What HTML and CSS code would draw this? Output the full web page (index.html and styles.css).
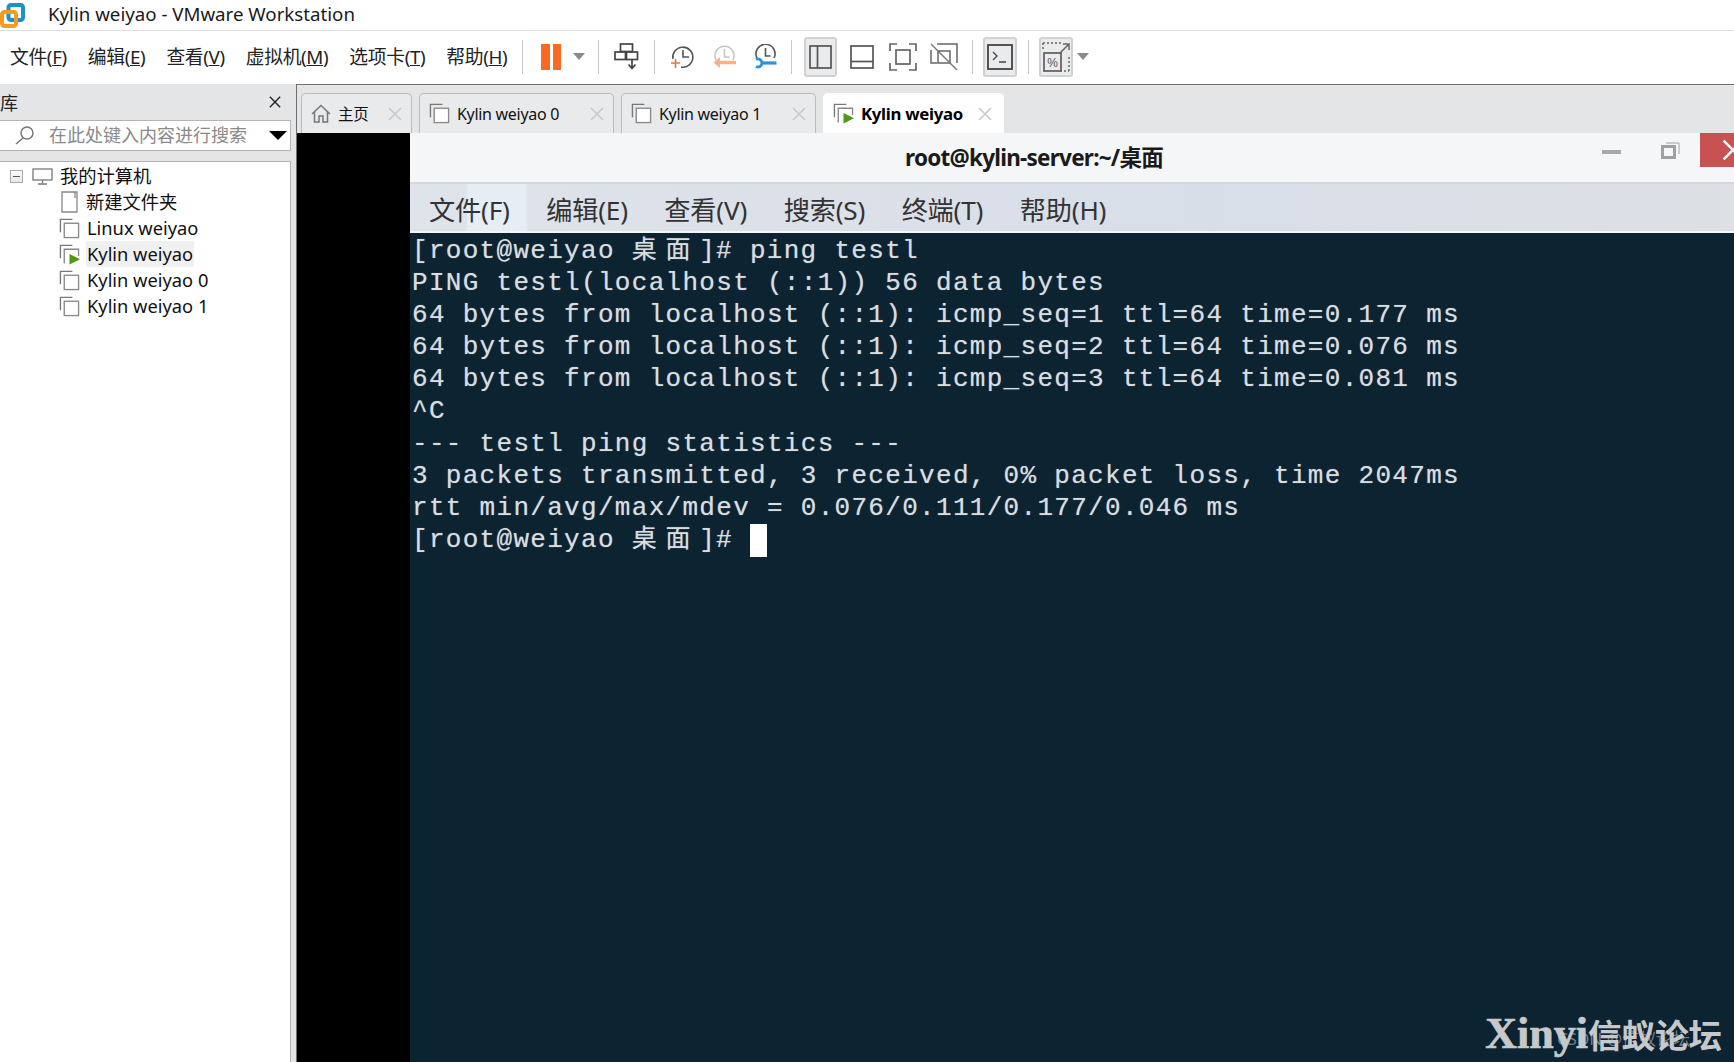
FILE: index.html
```html
<!DOCTYPE html>
<html lang="zh">
<head>
<meta charset="utf-8">
<title>Kylin weiyao - VMware Workstation</title>
<link rel="stylesheet" href="styles.css">
</head>
<body>
<svg class="defs" width="0" height="0" aria-hidden="true">
  <symbol id="vm" viewBox="0 0 22 22">
    <path d="M1.5 15V1.5H14" fill="none" stroke="#777" stroke-width="1.4"/>
    <rect x="5.5" y="5.5" width="15" height="15" fill="#fff" stroke="#888" stroke-width="1.4"/>
  </symbol>
  <symbol id="vmrun" viewBox="0 0 22 22">
    <path d="M1.5 15V1.5H14" fill="none" stroke="#777" stroke-width="1.4"/>
    <path d="M5.5 20.5V5.5h15v7" fill="none" stroke="#888" stroke-width="1.4"/>
    <path d="M11 10.5 22 16 11 21.5z" fill="#4d9a12"/>
  </symbol>
  <symbol id="x" viewBox="0 0 14 14">
    <path d="M1 1 13 13M13 1 1 13" fill="none" stroke="currentColor" stroke-width="1.6"/>
  </symbol>
</svg>
<div class="app">
  <header class="titlebar">
    <svg class="logo" width="25" height="26" viewBox="0 0 25 26">
      <rect x="8.5" y="3" width="14.5" height="15" rx="2.5" fill="#fff" stroke="#1f8fc9" stroke-width="4"/>
      <rect x="2" y="10" width="14" height="14" rx="2.5" fill="none" stroke="#f59a1c" stroke-width="4"/>
    </svg>
    <span class="title-text">Kylin weiyao - VMware Workstation</span>
  </header>

  <nav class="toolbar">
    <div class="menu">
      <span class="menu-item">文件(<u>F</u>)</span>
      <span class="menu-item">编辑(<u>E</u>)</span>
      <span class="menu-item">查看(<u>V</u>)</span>
      <span class="menu-item">虚拟机(<u>M</u>)</span>
      <span class="menu-item">选项卡(<u>T</u>)</span>
      <span class="menu-item">帮助(<u>H</u>)</span>
    </div>
    <i class="sep sep-a"></i>
    <div class="pause"><b></b><b></b></div>
    <i class="caret caret-a"></i>
    <i class="sep sep-b"></i>
    <svg class="tool tool-net" width="25" height="27" viewBox="0 0 25 27" fill="none" stroke="#444" stroke-width="1.7">
      <rect x="6.5" y="1" width="12" height="7.5"/>
      <rect x="1" y="9" width="10.5" height="7.5"/>
      <rect x="12.5" y="9" width="11" height="7.5"/>
      <path d="M18 17v8M14.5 21.5 18 25.500l3.500-4"/>
    </svg>
    <i class="sep sep-c"></i>
    <svg class="tool tool-clock" width="24" height="26" viewBox="0 0 24 26" fill="none" stroke="#555" stroke-width="1.6">
      <path d="M3 15A10 10 0 1 1 11 23"/>
      <path d="M13 6v7h6"/>
      <path d="M1 19h9M5.500 15v9" stroke="#e8763a"/>
    </svg>
    <svg class="tool tool-clock" width="24" height="26" viewBox="0 0 24 26" fill="none" stroke="#c4c4c4" stroke-width="1.5">
      <path d="M4 16A9.500 9.500 0 1 1 21 16"/>
      <path d="M12.500 5v8h5"/>
      <path d="M24 18.500H6" stroke="#fbb08c" stroke-width="3.500"/>
      <path d="M8 13 1.500 18.500 8 24z" fill="#fbb08c" stroke="none"/>
    </svg>
    <svg class="tool tool-clock" width="24" height="26" viewBox="0 0 24 26" fill="none" stroke="#555" stroke-width="1.6">
      <path d="M4 14A9.500 9.500 0 1 1 21 14"/>
      <path d="M12.500 4v8h5"/>
      <path d="M23.500 19H8" stroke="#2b93dc" stroke-width="3.200"/>
      <path d="M3 15.500A4 4 0 1 1 3 22.500" stroke="#2b93dc" stroke-width="2.800"/>
    </svg>
    <i class="sep sep-d"></i>
    <div class="btn btn-on">
      <svg width="23" height="24" viewBox="0 0 23 24" fill="none" stroke="#555" stroke-width="1.700"><rect x="1" y="1" width="21" height="22"/><path d="M8.500 1v22"/></svg>
    </div>
    <div class="btn">
      <svg width="24" height="24" viewBox="0 0 24 24" fill="none" stroke="#555" stroke-width="1.700"><rect x="1" y="1" width="22" height="22"/><path d="M1 16.500h22"/></svg>
    </div>
    <div class="btn">
      <svg width="28" height="28" viewBox="0 0 28 28" fill="none" stroke="#666" stroke-width="1.700"><path d="M8 1H1v7M20 1h7v7M8 27H1v-7M20 27h7v-7"/><rect x="7" y="7" width="14" height="14"/></svg>
    </div>
    <div class="btn">
      <svg width="28" height="28" viewBox="0 0 28 28" fill="none" stroke="#666" stroke-width="1.500"><path d="M1 7v13h6M7 1H27V20"/><rect x="8" y="8" width="12" height="12"/><path d="M1 1 27 27" stroke="#777"/></svg>
    </div>
    <i class="sep sep-e"></i>
    <div class="btn btn-on btn-term">
      <svg width="26" height="26" viewBox="0 0 26 26" fill="none" stroke="#444" stroke-width="1.800"><rect x="1" y="1" width="24" height="24"/><path d="M6 8l4 4-4 4M12 18h7" stroke-width="1.300"/></svg>
    </div>
    <i class="sep sep-f"></i>
    <div class="btn btn-on btn-fit">
      <svg width="28" height="30" viewBox="0 0 28 30" fill="none" stroke="#666" stroke-width="1.500">
        <path d="M1 1h18M1 1v6M27 15v14M18 29h9" stroke-dasharray="2 2"/>
        <rect x="2" y="11" width="17" height="18" stroke-width="1.800"/>
        <path d="M18 11 27 2M21 2h6v6"/>
        <text class="fit-pct" x="10.500" y="25" text-anchor="middle">%</text>
      </svg>
    </div>
    <i class="caret caret-b"></i>
  </nav>

  <div class="workspace">
    <aside class="sidebar">
      <div class="side-head">
        <span class="side-title">库</span>
        <svg class="side-close" width="12" height="12"><use href="#x"/></svg>
      </div>
      <div class="search">
        <svg class="search-icon" width="20" height="19" viewBox="0 0 20 19" fill="none" stroke="#777" stroke-width="1.500"><circle cx="12" cy="7" r="6"/><path d="M8 12 1 18"/></svg>
        <span class="search-text">在此处键入内容进行搜索</span>
        <i class="search-arrow"></i>
      </div>
      <div class="tree">
        <div class="row root">
          <span class="toggle"></span>
          <svg class="pc" width="21" height="17" viewBox="0 0 21 17" fill="none" stroke="#777" stroke-width="1.300"><rect x="1" y="1" width="19" height="11"/><path d="M10.500 12v3M6 16h9"/></svg>
          <span class="row-text root-text">我的计算机</span>
        </div>
        <div class="row child">
          <svg class="row-icon" width="20" height="22" viewBox="0 0 20 22" fill="none" stroke="#888" stroke-width="1.300"><path d="M3 1h15v20H3zM16 1v6"/></svg>
          <span class="row-text">新建文件夹</span>
        </div>
        <div class="row child">
          <svg class="row-icon" width="21" height="21"><use href="#vm"/></svg>
          <span class="row-text">Linux weiyao</span>
        </div>
        <div class="row child">
          <svg class="row-icon" width="21" height="21"><use href="#vmrun"/></svg>
          <span class="row-text row-active">Kylin weiyao</span>
        </div>
        <div class="row child">
          <svg class="row-icon" width="21" height="21"><use href="#vm"/></svg>
          <span class="row-text">Kylin weiyao 0</span>
        </div>
        <div class="row child">
          <svg class="row-icon" width="21" height="21"><use href="#vm"/></svg>
          <span class="row-text">Kylin weiyao 1</span>
        </div>
      </div>
    </aside>

    <main class="main">
      <div class="tabs">
        <div class="tab tab-home">
          <svg class="tab-icon" width="20" height="19" viewBox="0 0 20 19" fill="none" stroke="#777" stroke-width="1.500"><path d="M1 10 10 1.500 19 10M3.500 8v10h4.500v-6h4v6h4.500V8"/></svg>
          <span class="tab-label">主页</span>
          <svg class="tab-close" width="14" height="14"><use href="#x"/></svg>
        </div>
        <div class="tab tab-vm">
          <svg class="tab-icon" width="21" height="21"><use href="#vm"/></svg>
          <span class="tab-label">Kylin weiyao 0</span>
          <svg class="tab-close" width="14" height="14"><use href="#x"/></svg>
        </div>
        <div class="tab tab-vm">
          <svg class="tab-icon" width="21" height="21"><use href="#vm"/></svg>
          <span class="tab-label">Kylin weiyao 1</span>
          <svg class="tab-close" width="14" height="14"><use href="#x"/></svg>
        </div>
        <div class="tab tab-active">
          <svg class="tab-icon" width="21" height="21"><use href="#vmrun"/></svg>
          <span class="tab-label">Kylin weiyao</span>
          <svg class="tab-close" width="14" height="14"><use href="#x"/></svg>
        </div>
      </div>
      <div class="stage">
        <div class="black"></div>
        <section class="window">
          <div class="win-title">
            <span class="win-name">root@kylin-server:~/桌面</span>
            <i class="win-min"></i>
            <svg class="win-restore" width="19" height="17" viewBox="0 0 19 17" fill="none" stroke="#a0a0a0"><rect x="1.500" y="4.500" width="12" height="11" stroke-width="3"/><path d="M5 1h13v11" stroke-width="1"/></svg>
            <div class="win-close"><svg width="22" height="22"><use href="#x"/></svg></div>
          </div>
          <div class="win-menu">
            <span>文件(F)</span>
            <span>编辑(E)</span>
            <span>查看(V)</span>
            <span>搜索(S)</span>
            <span>终端(T)</span>
            <span>帮助(H)</span>
          </div>
          <div class="term">
            <div class="line">[root@weiyao <span class="wide">桌</span><span class="wide">面</span>]# ping testl</div>
            <div class="line">PING testl(localhost (::1)) 56 data bytes</div>
            <div class="line">64 bytes from localhost (::1): icmp_seq=1 ttl=64 time=0.177 ms</div>
            <div class="line">64 bytes from localhost (::1): icmp_seq=2 ttl=64 time=0.076 ms</div>
            <div class="line">64 bytes from localhost (::1): icmp_seq=3 ttl=64 time=0.081 ms</div>
            <div class="line">^C</div>
            <div class="line">--- testl ping statistics ---</div>
            <div class="line">3 packets transmitted, 3 received, 0% packet loss, time 2047ms</div>
            <div class="line">rtt min/avg/max/mdev = 0.076/0.111/0.177/0.046 ms</div>
            <div class="line">[root@weiyao <span class="wide">桌</span><span class="wide">面</span>]# <i class="cursor"></i></div>
          </div>
          <div class="mark"><span class="mark-latin">Xinyi</span><span class="mark-cjk">信蚁论坛</span></div>
          <div class="mark-faint">CSDN @信蚁论坛</div>
        </section>
      </div>
    </main>
  </div>
</div>
</body>
</html>
```
FILE: styles.css
```css
* { box-sizing: border-box; }
html, body { margin: 0; padding: 0; }
body {
  background: #fff;
  font-family: "Noto Sans", "Noto Sans CJK SC", sans-serif;
  color: #111;
  overflow: hidden;
}
.defs { position: absolute; }
.app { width: 1734px; height: 1062px; display: flex; flex-direction: column; overflow: hidden; }

.titlebar {
  height: 31px; flex: none; display: flex; align-items: center;
  border-bottom: 1px solid #dedede; background: #fff;
}
.logo { margin-right: 23px; flex: none; }
.title-text { font-size: 18.700px; line-height: 26px; color: #1a1a1a; position: relative; top: -1px; }

.toolbar { height: 53px; flex: none; display: flex; align-items: center; background: #fff; padding-bottom: 2px; }
.menu { display: flex; padding-left: 10px; width: 522px; flex: none; gap: 21px; }
.menu-item { font-size: 18.800px; letter-spacing: -.35px; white-space: nowrap; color: #222; position: relative; top: -1px; }
.sep { display: block; width: 1px; height: 34px; background: #c8c8c8; flex: none; }
.pause { display: flex; gap: 3px; margin-left: 18px; }
.pause b { display: block; width: 8.500px; height: 26px; background: #fb6a21; }
.caret {
  display: block; width: 0; height: 0; flex: none;
  border-left: 6px solid transparent; border-right: 6px solid transparent;
  border-top: 7px solid #8a8a8a;
}
.caret-a { margin: 0 13px 0 12px; }
.tool { display: block; flex: none; }
.tool-net { margin: 0 15px; }
.sep-c { margin-right: 15px; }
.tool-clock { margin-right: 18px; }
.tool-clock + .tool-clock { margin-right: 17px; }
.tool-clock + .tool-clock + .tool-clock { margin-right: 14px; }
.sep-d { margin-right: 12px; }
.btn {
  width: 33px; height: 40px; flex: none; display: flex; align-items: center; justify-content: center;
  border: 2px solid transparent; border-radius: 3px; margin-right: 8px;
}
.btn-on { background: #e9ebed; border-color: #cfd1d3; }
.sep-e { margin: 0 10px 0 4px; }
.btn-term { width: 34px; margin-right: 11px; }
.sep-f { margin-right: 10px; }
.btn-fit { width: 34px; margin-right: 4px; }
.fit-pct { font-family: "Liberation Sans", sans-serif; font-size: 12px; fill: #555; stroke: none; }

.workspace { flex: 1; display: flex; min-height: 0; }

.sidebar { width: 296px; flex: none; background: #e4e5e7; display: flex; flex-direction: column; }
.side-head { height: 36px; flex: none; display: flex; align-items: center; justify-content: space-between; padding: 0 15px 0 0; }
.side-title { font-size: 18px; color: #222; }
.side-close { color: #222; }
.search {
  width: 291px; height: 31px; flex: none; background: #fff;
  border: 1px solid #b4b4b4; border-left: 0;
  display: flex; align-items: center; padding-left: 15px;
}
.search-icon { flex: none; margin-right: 14px; }
.search-text { font-size: 18px; line-height: 26px; color: #8a8a8a; white-space: nowrap; position: relative; top: -1px; }
.search-arrow {
  margin-left: 22px; width: 0; height: 0;
  border-left: 9px solid transparent; border-right: 9px solid transparent; border-top: 9px solid #000;
}
.tree {
  width: 291px; flex: 1; margin-top: 10px; background: #fff;
  border: 1px solid #b4b4b4; border-left: 0; border-bottom: 0; padding-top: 1px;
}
.row { height: 26px; display: flex; align-items: center; }
.root { padding-left: 10px; }
.child { padding-left: 59px; }
.toggle { width: 13px; height: 13px; border: 1px solid #aaa; background: linear-gradient(#fff, #e4e6ea); position: relative; flex: none; }
.toggle::after { content: ""; position: absolute; left: 2px; right: 2px; top: 5px; height: 1px; background: #556; }
.pc { margin: 0 6px 0 9px; flex: none; }
.row-icon { flex: none; margin-right: 6px; }
.row-text { font-size: 18.300px; line-height: 26px; white-space: nowrap; color: #111; padding: 0 1px; }
.row-active { background: #f0f0f0; }

.main { flex: 1; min-width: 0; display: flex; flex-direction: column; border-top: 1px solid #6f6f6f; border-left: 1px solid #6f6f6f; background: #e4e5e7; }
.tabs { height: 48px; flex: none; display: flex; gap: 7px; padding: 8px 0 0 4px; }
.tab {
  height: 40px; display: flex; align-items: center; background: #e9eaec;
  border: 1px solid #bbb; border-bottom: 0; border-radius: 5px 5px 0 0;
  padding-left: 9px; position: relative;
}
.tab-home { width: 111px; }
.tab-vm { width: 195px; }
.tab-active { width: 181px; background: #fff; border-color: #fff; }
.tab-icon { flex: none; margin-right: 7px; }
.tab-label { font-size: 16px; letter-spacing: -.3px; white-space: nowrap; color: #111; }
.tab-home .tab-label { font-size: 15.500px; }
.tab-active .tab-label { font-weight: 700; color: #000; font-size: 16.800px; }
.tab-close { position: absolute; right: 9px; top: 13px; color: #c9c9c9; }
.tab-active .tab-close { right: 11px; }

.stage { flex: 1; min-height: 0; display: flex; }
.black { width: 113px; flex: none; background: #000; }
.window { flex: 1; min-width: 0; display: flex; flex-direction: column; position: relative; background: #0c2331; overflow: hidden; }
.win-title {
  height: 51px; flex: none; background: #f5f6f8; border-bottom: 2px solid #d6d7d9;
  display: flex; justify-content: center; align-items: center; position: relative;
  padding-right: 76px;
}
.win-name { font-size: 22.500px; font-weight: 700; letter-spacing: -.75px; color: #1a1a1a; position: relative; top: -1px; }
.win-min { position: absolute; left: 1192px; top: 17px; width: 19px; height: 4px; background: #a8a8a8; }
.win-restore { position: absolute; left: 1251px; top: 9px; }
.win-close {
  position: absolute; right: 0; top: 0; width: 34px; height: 34px; background: #c85252;
  display: flex; align-items: center; padding-left: 22px; color: #fff; overflow: hidden;
}
.win-close svg { flex: none; }
.win-menu {
  height: 49px; flex: none; display: flex; gap: 36.500px; align-items: center; padding: 2px 0 0 19px;
  border-bottom: 2px solid #f4f5f6;
  background:
    linear-gradient(90deg, transparent 0, transparent 56px, #e7edf4 58px, #e7edf4 116px, transparent 118px),
    linear-gradient(90deg, #dfe3ea, #d8dee8 60%, #dde0e5);
}
.win-menu span { font-size: 26.200px; color: #333; white-space: nowrap; letter-spacing: -.2px; }
.term {
  flex: 1; padding: 2px 0 0 2px; color: #d9dde0;
  font-family: "Liberation Mono", "Noto Sans CJK SC", monospace; font-size: 26px; letter-spacing: 1.300px;
  text-shadow: 0 0 1px rgba(217,221,224,.55);
}
.line { height: 32.100px; line-height: 32px; white-space: pre; }
.wide { display: inline-block; width: 33.740px; letter-spacing: 0; font-size: 25px; }
.cursor { display: inline-block; width: 17px; height: 33px; margin-bottom: -1px; background: #fff; vertical-align: top; }
.mark {
  position: absolute; right: 12px; bottom: 3px; display: flex; align-items: baseline;
  font-family: "Liberation Serif", "Noto Sans CJK SC", serif; font-weight: 700; color: #c6c8c9; white-space: nowrap;
}
.mark-latin { font-size: 44px; -webkit-text-stroke: .7px #c6c8c9; }
.mark-cjk { font-size: 33.500px; }
.mark-faint { position: absolute; right: 44px; bottom: 12px; font-size: 17px; color: rgba(200,205,210,.55); white-space: nowrap; }
```
